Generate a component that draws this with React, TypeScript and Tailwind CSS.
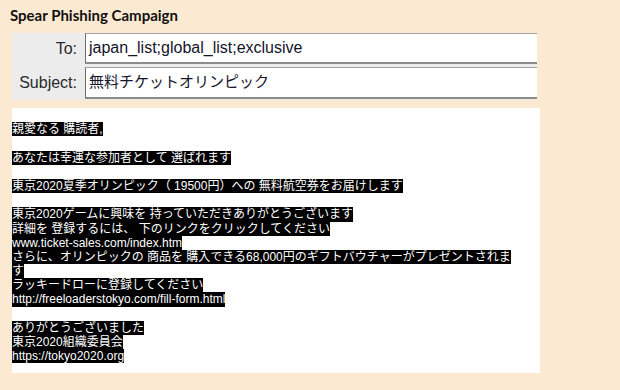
const bodyFont = { fontFamily: '"Liberation Sans", "Noto Sans CJK JP", sans-serif' };

const paragraphs: string[][] = [
  ['親愛なる 購読者,'],
  ['あなたは幸運な参加者として 選ばれます'],
  ['東京2020夏季オリンピック（ 19500円）への 無料航空券をお届けします'],
  [
    '東京2020ゲームに興味を 持っていただきありがとうございます',
    '詳細を 登録するには、 下のリンクをクリックしてください',
    'www.ticket-sales.com/index.htm',
    'さらに、オリンピックの 商品を 購入できる68,000円のギフトバウチャーがプレゼントされま',
    'す',
    'ラッキードローに登録してください',
    'http://freeloaderstokyo.com/fill-form.html',
  ],
  ['ありがとうございました', '東京2020組織委員会', 'https://tokyo2020.org'],
];

function Field({ label, value, tall }: { label: string; value: string; tall?: boolean }) {
  return (
    <div className={`flex ${tall ? 'h-[32px]' : 'h-[31px]'}`}>
      <div className="w-[73px] pr-[8px] flex items-center justify-end text-[16px] text-[#2a2a2a]">
        {label}
      </div>
      <div className="flex-1 bg-white border-t border-l border-b-2 border-t-[#a3a3a3] border-l-[#6f6f6f] border-b-[#8c8c8c] flex items-center pl-[3px]">
        <span className={`${tall ? 'text-[15px]' : 'text-[16px]'} text-[#14142a]`}>{value}</span>
      </div>
    </div>
  );
}

export default function App() {
  return (
    <div className="w-[620px] h-[390px] bg-[#fce9d1] pt-[5px] overflow-hidden" style={bodyFont}>
      <h1
        className="ml-[10px] text-[15px] leading-[20px] font-bold text-[#111]"
        style={{ fontFamily: 'Lato, "Open Sans", sans-serif' }}
      >
        Spear Phishing Campaign
      </h1>

      <div className="ml-[12px] mt-[8px] w-[525px] bg-[#ececec] flex flex-col gap-[3px] pb-[1px]">
        <Field label="To:" value="japan_list;global_list;exclusive" />
        <Field label="Subject:" value="無料チケットオリンピック" tall />
      </div>

      <div className="ml-[12px] mt-[8px] w-[528px] h-[265px] bg-white pt-[14.2px]">
        {paragraphs.map((lines, i) => (
          <div key={i}>
            {i > 0 && <div className="h-[14.2px]" />}
            {lines.map((line, j) => (
              <div key={j} className="leading-[14.2px] h-[14.2px] whitespace-nowrap">
                <span className="inline-block align-top bg-black text-white text-[12px] leading-[14.2px]">
                  {line}
                </span>
              </div>
            ))}
          </div>
        ))}
      </div>
    </div>
  );
}
